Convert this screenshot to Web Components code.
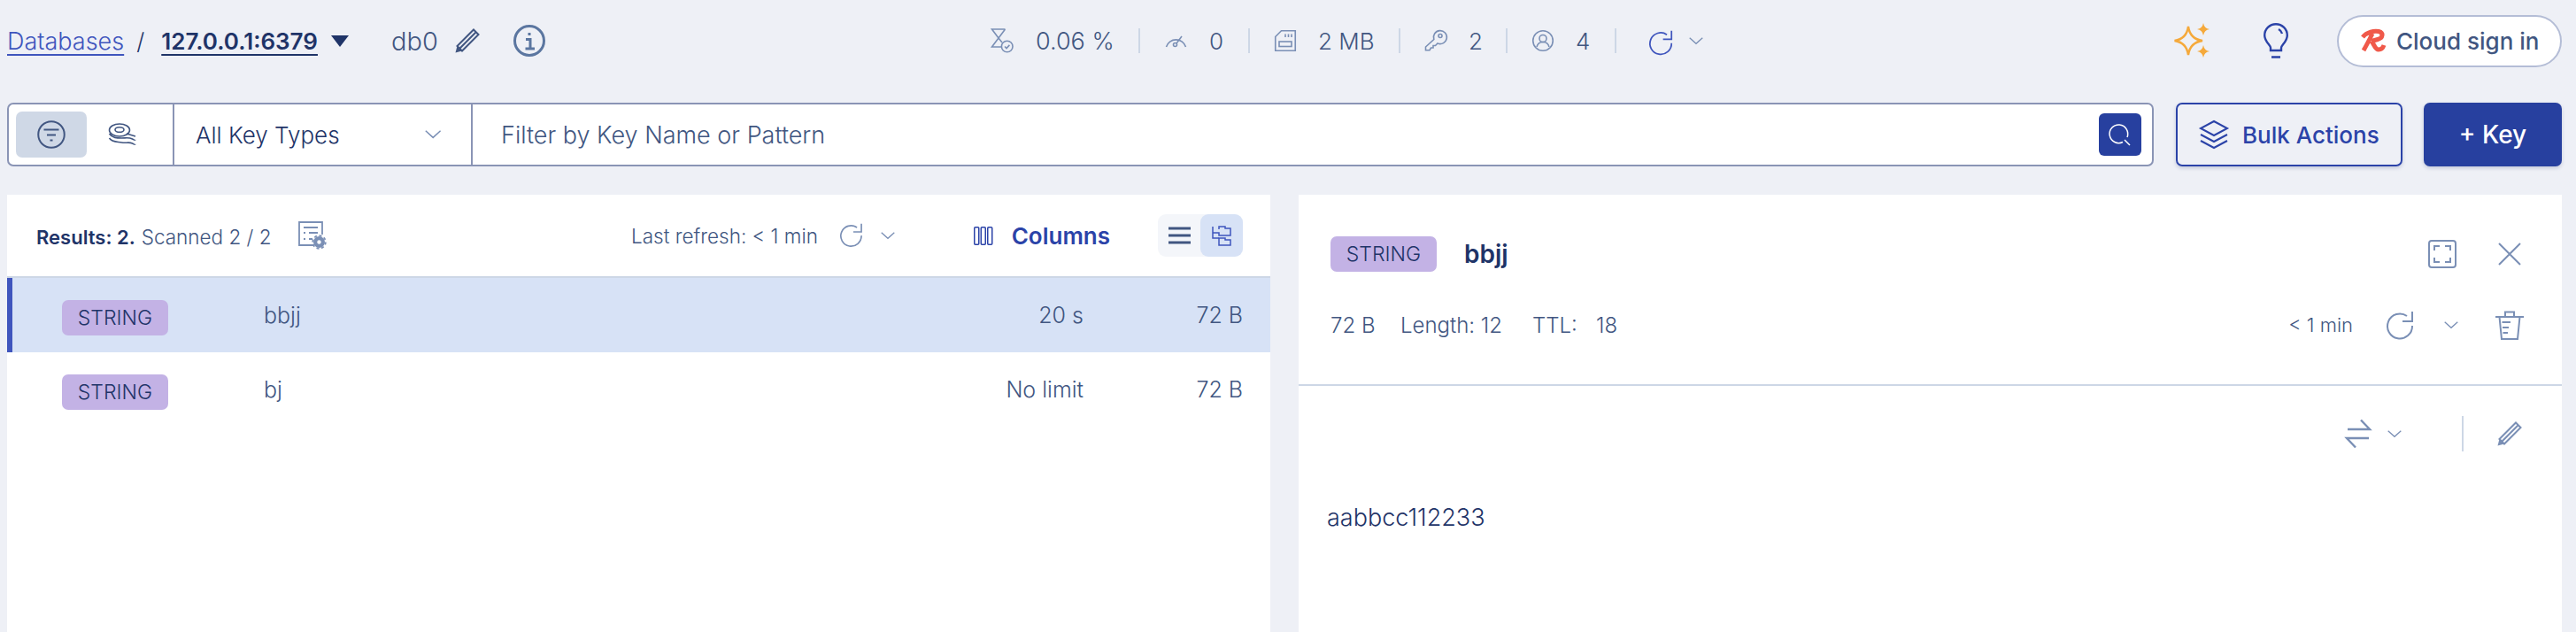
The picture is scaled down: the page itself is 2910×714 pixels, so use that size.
<!DOCTYPE html>
<html>
<head>
<meta charset="utf-8">
<title>Browser</title>
<style>
html, body
{
	margin     : 0;
	padding    : 0;
	height     : 714px;
	overflow   : hidden;
	background : #eef0f6;
	color      : #415681;
	font-family: Inter, "Liberation Sans", sans-serif;
	font-size  : 24px;
	font-weight: 350;
}
</style>
</head>
<body>
<rs-app>
	<rs-top-bar slot="top"></rs-top-bar>
	<rs-filter-bar slot="filter"></rs-filter-bar>
	<rs-key-list slot="left">
		<rs-key-row selected name="bbjj" ttl="20 s" size="72 B"></rs-key-row>
		<rs-key-row name="bj" ttl="No limit" size="72 B"></rs-key-row>
	</rs-key-list>
	<rs-key-details slot="right"></rs-key-details>
</rs-app>

<script>
const ICONS = {
	hourglass : [25, 28, `<path d="M15.5 1H0.5L8 11L0.5 21H11M15.5 1L8 11L12 16"/><circle cx="17.7" cy="20.5" r="6.3"/><path d="M15 20.5l2 2 3.4-3.6"/>`],
	gauge     : [25, 16, `<path d="M1.5 15A11.5 11.5 0 0 1 23.5 15"/><circle cx="11.5" cy="12.5" r="2"/><path d="M13 11L19 3"/>`],
	sd        : [24, 24, `<path d="M0.75 7.5L7.5 0.75H23.25V23.25H0.75Z"/><path d="M12 4.5V8M15.5 4.5V8M19 4.5V8"/><rect x="5" y="13" width="14" height="5.5"/>`],
	key       : [24, 24, `<path d="M9.8 10.5a7.5 7.5 0 1 1 4.2 4.5l-2.5 2.5h-2.5v2.5h-2.5l-1.5 2.7h-4.5v-3.7z"/><circle cx="17" cy="6.5" r="2"/>`],
	user      : [24, 24, `<circle cx="12" cy="12" r="11.25"/><circle cx="12" cy="9.5" r="4"/><path d="M5 19c1-4 4-5.5 7-5.5s6 1.5 7 5.5"/>`],
	refresh   : [30, 33, `<path d="M23 6A14 14 0 1 0 29 17"/><path d="M29 1V12H18"/>`],
	chevron   : [16, 8, `<path d="M0.7 0.7L8 7.3L15.3 0.7"/>`],
	filter    : [32, 32, `<circle cx="16" cy="16" r="14.75"/><path d="M7.5 10.5H24.5M11 16.5H21M14.5 22.5H17.5"/>`],
	redis     : [32, 26, `<ellipse cx="13" cy="8" rx="11.5" ry="7"/><ellipse cx="13" cy="7.5" rx="5" ry="2.8"/><path d="M21 12L31 15M1.5 12c3 5 9 5 14 5s8-1 12 1 3 1 3 1M1.5 17c3 5 9 4 14 5s8-1 12 1 3 1 3 1"/>`],
	sparkle   : [40, 40, `<path d="M16 4Q18 18 32 20Q18 22 16 36Q14 22 0.5 20Q14 18 16 4Z"/><path class="fill" d="M33 0Q34 6 40 7Q34 8 33 14Q32 8 26 7Q32 6 33 0ZM33 25Q34 31 40 32Q34 33 33 39Q32 33 26 32Q32 31 33 25Z"/>`],
	bulb      : [28, 40, `<path d="M8 31V28C8 25 1.2 21 1.2 14A12.8 12.8 0 0 1 26.8 14C26.8 21 20 25 20 28V31Z"/><path d="M9 38.5H19M17 7A8 8 0 0 1 21 12"/>`],
	logo      : [29, 27, `<path d="M3 9C8 3 16 1.5 21 2.5C27 4 26 10 20 11.5L13 13.5M14 5C11 11 8 17 4 24M13 13.5C16 17 17 23 21 23C24 23 26 21 27 18"/>`],
	layers    : [32, 32, `<path d="M16 1L31 9L16 17L1 9Z"/><path d="M1 16L16 24L31 16M1 23L16 31L31 23"/>`],
	search    : [24, 24, `<path d="M15 20.5A10.3 10.3 0 1 1 20 15"/><path d="M17 18L23 24"/>`],
	pencil    : [28, 28, `<path d="M21 1.5L26.5 7L8 25.5L2.5 20Z"/><path d="M23.7 4.3L5.3 22.7"/><path class="fill" d="M2.5 20L8 25.5L0.5 27.5Z"/>`],
	info      : [36, 36, `<circle cx="18" cy="18" r="16.5"/><path d="M14 16.5H19V27M13.5 27H24"/><path d="M16.5 10.5H19.5"/>`],
	file      : [32, 32, `<path d="M18 27H1V1H27V15"/><path d="M6 7H22M6 13H8M12 13H22M6 20H8M12 20H16"/><circle class="fill" cx="23.5" cy="23.5" r="6.5"/><circle cx="23.5" cy="23.5" r="7.3" stroke-width="2.4" stroke-dasharray="3 2.7" fill="none"/><circle cx="23.5" cy="23.5" r="2.2" style="fill:#fff;stroke:none"/>`],
	columns   : [22, 21, `<rect x="0.75" y="0.75" width="5" height="19.5" rx="1"/><rect x="8.25" y="0.75" width="5" height="19.5" rx="1"/><rect x="15.75" y="0.75" width="5" height="19.5" rx="1"/>`],
	list      : [25, 20, `<path d="M0 2H25M0 10H25M0 18H25"/>`],
	tree      : [22, 23, `<path d="M1 1V14H8M8 4V1H15V3H21V11H8V8H1"/><path d="M8 14H15V16H21V22H8Z"/>`],
	expand    : [32, 32, `<rect x="1" y="1" width="30" height="30" rx="3"/><path d="M7 12V7H13M19 7H25V12M25 20V25H19M13 25H7V20"/>`],
	close     : [26, 26, `<path d="M1 1L25 25M25 1L1 25"/>`],
	trash     : [32, 33, `<path d="M0 7H32M11 6.5V1.5H21V6.5M4.5 7L7 32H25L27.5 7M7.5 13H17M8 19H15M8.5 25H14"/>`],
	transfer  : [28, 34, `<path d="M2 12H27L17 1.5M26 22H1L11 32.5"/>`],
};

class RsIcon extends HTMLElement
{
	constructor ()
	{
		super();
		this.attachShadow({mode:"open"});
	}

	connectedCallback ()
	{
		let [w, h, body] = ICONS[this.getAttribute("name")];
		let sw = this.getAttribute("sw") || 2;
		this.shadowRoot.innerHTML = `
			<style>
			:host { display:block; flex:none; width:${w}px; height:${h}px; color:#7a8fb5; }
			svg   { display:block; overflow:visible; }
			svg * { fill:none; stroke:currentColor; stroke-width:${sw}; }
			svg .fill { fill:currentColor; stroke:none; }
			</style>
			<svg width="${w}" height="${h}" viewBox="0 0 ${w} ${h}">${body}</svg>
		`;
	}
}

class RsBadge extends HTMLElement
{
	constructor ()
	{
		super();
		this.attachShadow({mode:"open"});
		this.shadowRoot.innerHTML = `
			<style>
			:host
			{
				display         : flex;
				flex            : none;
				align-items     : center;
				justify-content : center;
				width           : 120px;
				height          : 40px;
				background      : #c3b2e5;
				border-radius   : 7px;
				color           : #1f3468;
				font-size       : 23px;
			}
			</style>
			<slot></slot>
		`;
	}
}

class RsStat extends HTMLElement
{
	constructor ()
	{
		super();
		this.attachShadow({mode:"open"});
		this.shadowRoot.innerHTML = `
			<style>
			:host
			{
				display      : flex;
				align-items  : center;
				gap          : 25px;
				box-sizing   : border-box;
				height       : 28px;
				padding-left : 28px;
				border-right : 2px solid #cdd7e6;
				font-size    : 26px;
				color        : #415681;
			}
			:host(:first-child) { padding-left : 0; }
			</style>
			<slot name="icon"></slot>
			<slot></slot>
		`;
	}
}

class RsTopBar extends HTMLElement
{
	constructor ()
	{
		super();
		this.attachShadow({mode:"open"});
		this.shadowRoot.innerHTML = `
			<style>
			:host
			{
				display               : grid;
				grid-template-columns : 1112px auto 1fr;
				align-items           : center;
				height                : 92px;
			}
			.crumbs, .stats, .end { display:flex; align-items:center; }
			.link { color:#3f55bd; text-decoration:underline; text-underline-offset:5px; text-decoration-thickness:2px; font-size:27px; }
			.sep  { color:#1f3468; margin:0 19px 0 14px; font-size:26px; }
			.host { color:#1f3468; font-weight:600; font-size:26px; text-decoration:underline; text-underline-offset:5px; text-decoration-thickness:2px; }
			.caret { width:0; height:0; margin:0 48px 0 15px; border:10px solid transparent; border-top:13px solid #1f3468; border-bottom:0; }
			.db   { font-size:29px; margin-right:19px; }
			.edit { margin-right:38px; color:#415681; }
			.info { color:#5b76a0; }
			.end  { justify-content:flex-end; }
			.cloud
			{
				display       : flex;
				align-items   : center;
				gap           : 12px;
				box-sizing    : border-box;
				width         : 254px;
				height        : 59px;
				margin-left   : 55px;
				padding-left  : 24px;
				background    : #fff;
				border        : 2px solid #b4bdd6;
				border-radius : 30px;
				font-size     : 26px;
				font-weight   : 500;
			}
			.refresh { display:flex; align-items:center; gap:22px; padding-left:37px; }
			</style>
			<div class="crumbs">
				<span class="link">Databases</span><span class="sep">/</span><span class="host">127.0.0.1:6379</span>
				<span class="caret"></span>
				<span class="db">db0</span>
				<rs-icon class="edit" name="pencil"></rs-icon>
				<rs-icon class="info" name="info" sw="3"></rs-icon>
			</div>
			<div class="stats">
				<rs-stat style="width:168px;font-size:27px"><rs-icon slot="icon" name="hourglass" sw="1.6"></rs-icon>0.06 %</rs-stat>
				<rs-stat style="width:124px"><rs-icon slot="icon" name="gauge" sw="1.6"></rs-icon>0</rs-stat>
				<rs-stat style="width:170px"><rs-icon slot="icon" name="sd" sw="1.6"></rs-icon>2 MB</rs-stat>
				<rs-stat style="width:121px"><rs-icon slot="icon" name="key" sw="1.6"></rs-icon>2</rs-stat>
				<rs-stat style="width:123px"><rs-icon slot="icon" name="user" sw="1.6"></rs-icon>4</rs-stat>
				<div class="refresh">
					<rs-icon name="refresh" style="color:#3f55bd;width:26px;height:28px;zoom:.87" sw="2"></rs-icon>
					<rs-icon name="chevron" sw="1.3"></rs-icon>
				</div>
			</div>
			<div class="end">
				<rs-icon name="sparkle" style="color:#f5a93b" sw="2.4"></rs-icon>
				<rs-icon name="bulb" style="color:#2b43a8;margin-left:61px" sw="2.4"></rs-icon>
				<div class="cloud">
					<rs-icon name="logo" style="color:#f0594a" sw="5"></rs-icon>
					<span>Cloud sign in</span>
				</div>
			</div>
		`;
	}
}

class RsFilterBar extends HTMLElement
{
	constructor ()
	{
		super();
		this.attachShadow({mode:"open"});
		this.shadowRoot.innerHTML = `
			<style>
			:host
			{
				display     : flex;
				height      : 72px;
				margin-top  : 24px;
			}
			.box
			{
				flex          : 1;
				display       : flex;
				box-sizing    : border-box;
				background    : #fff;
				border        : 2px solid #8a94b5;
				border-radius : 7px;
			}
			.modes
			{
				display      : flex;
				align-items  : center;
				box-sizing   : border-box;
				width        : 187px;
				padding-left : 8px;
				border-right : 2px solid #8a94b5;
			}
			.mode
			{
				display         : flex;
				align-items     : center;
				justify-content : center;
				width           : 80px;
				height          : 52px;
				border-radius   : 7px;
			}
			.mode.on { background:#cfd8e6; margin-right:0; }
			.types
			{
				display         : flex;
				align-items     : center;
				justify-content : space-between;
				box-sizing      : border-box;
				width           : 337px;
				padding         : 0 30px 0 24px;
				border-right    : 2px solid #8a94b5;
				color           : #1f3468;
				font-size       : 26px;
			}
			.query
			{
				flex        : 1;
				display     : flex;
				align-items : center;
				padding     : 0 12px 0 32px;
				font-size   : 27px;
			}
			.query span { flex:1; }
			.go
			{
				display         : flex;
				align-items     : center;
				justify-content : center;
				width           : 48px;
				height          : 48px;
				background      : #27409f;
				border-radius   : 6px;
			}
			.bulk
			{
				display       : flex;
				align-items   : center;
				gap           : 16px;
				box-sizing    : border-box;
				width         : 256px;
				margin-left   : 25px;
				padding-left  : 25px;
				border        : 2px solid #2b43a8;
				border-radius : 7px;
				box-shadow    : 0 2px 4px rgba(30,50,110,.2);
				color         : #2b43a8;
				font-size     : 26px;
				font-weight   : 500;
			}
			.add
			{
				display         : flex;
				align-items     : center;
				justify-content : center;
				width           : 156px;
				margin-left     : 24px;
				background      : #27409f;
				border-radius   : 7px;
				box-shadow      : 0 2px 4px rgba(30,50,110,.2);
				color           : #fff;
				font-size       : 28px;
				font-weight     : 500;
			}
			</style>
			<div class="box">
				<div class="modes">
					<div class="mode on"><rs-icon name="filter" style="color:#415681" sw="2"></rs-icon></div>
					<div class="mode"><rs-icon name="redis" style="color:#415681" sw="1.6"></rs-icon></div>
				</div>
				<div class="types">
					<span>All Key Types</span>
					<rs-icon name="chevron" sw="1.3" style="width:19px;zoom:1.15"></rs-icon>
				</div>
				<div class="query">
					<span>Filter by Key Name or Pattern</span>
					<div class="go"><rs-icon name="search" style="color:#fff" sw="1.5"></rs-icon></div>
				</div>
			</div>
			<div class="bulk"><rs-icon name="layers" style="color:#2b43a8" sw="2"></rs-icon><span>Bulk Actions</span></div>
			<div class="add">+ Key</div>
		`;
	}
}

class RsKeyRow extends HTMLElement
{
	constructor ()
	{
		super();
		this.attachShadow({mode:"open"});
	}

	connectedCallback ()
	{
		let name = this.getAttribute("name");
		let ttl  = this.getAttribute("ttl");
		let size = this.getAttribute("size");
		this.shadowRoot.innerHTML = `
			<style>
			:host
			{
				display               : grid;
				grid-template-columns : 228px 1fr auto 180px;
				align-items           : center;
				box-sizing            : border-box;
				height                : 84px;
				padding               : 0 31px 0 62px;
				font-size             : 25px;
			}
			:host([selected])
			{
				background   : #d7e2f6;
				border-left  : 6px solid #3f55bd;
				padding-left : 56px;
			}
			rs-badge { margin-top : 6px; }
			.size    { text-align : right; }
			</style>
			<rs-badge>STRING</rs-badge>
			<span>${name}</span>
			<span>${ttl}</span>
			<span class="size">${size}</span>
		`;
	}
}

class RsKeyList extends HTMLElement
{
	constructor ()
	{
		super();
		this.attachShadow({mode:"open"});
		this.shadowRoot.innerHTML = `
			<style>
			:host { display:block; background:#fff; height:494px; }
			header
			{
				display       : flex;
				align-items   : center;
				box-sizing    : border-box;
				height        : 94px;
				padding       : 0 31px 0 33px;
				border-bottom : 2px solid #cdd7e6;
				font-size     : 22.5px;
			}
			.count { padding-top:3px; }
			b { color:#1f3468; font-weight:600; margin-right:7px; font-size:22px; }
			.side { display:flex; align-items:center; margin-left:auto; }
			.cols { color:#2b43a8; font-size:26px; font-weight:600; }
			.view { display:flex; width:96px; height:48px; margin-left:54px; background:#f4f6fa; border-radius:9px; }
			.view div { display:flex; flex:1; align-items:center; justify-content:center; border-radius:9px; }
			.view .on { background:#d7e2f6; }
			</style>
			<header>
				<div class="count"><b>Results: 2.</b><span>Scanned 2 / 2</span></div>
				<rs-icon name="file" sw="1.8" style="margin-left:30px"></rs-icon>
				<div class="side">
					<span>Last refresh: &lt; 1 min</span>
					<rs-icon name="refresh" sw="2" style="margin-left:30px;zoom:.83"></rs-icon>
					<rs-icon name="chevron" sw="1.3" style="margin-left:21px"></rs-icon>
					<rs-icon name="columns" sw="1.5" style="color:#2b43a8;margin-left:89px"></rs-icon>
					<span class="cols" style="margin-left:21px">Columns</span>
					<div class="view">
						<div><rs-icon name="list" sw="3" style="color:#415681"></rs-icon></div>
						<div class="on"><rs-icon name="tree" sw="1.5" style="color:#3f55bd"></rs-icon></div>
					</div>
				</div>
			</header>
			<slot></slot>
		`;
	}
}

class RsKeyDetails extends HTMLElement
{
	constructor ()
	{
		super();
		this.attachShadow({mode:"open"});
		this.shadowRoot.innerHTML = `
			<style>
			:host { display:block; background:#fff; height:494px; }
			header
			{
				display       : grid;
				grid-template-rows : 40px 40px;
				row-gap       : 40px;
				padding       : 47px 43px 47px 36px;
				border-bottom : 2px solid #cdd7e6;
			}
			.row { display:flex; align-items:center; }
			.name { color:#1f3468; font-size:28px; font-weight:600; margin-left:31px; }
			.push { margin-left:auto; }
			.meta { font-size:24px; display:grid; grid-template-columns:79px 149px 72px auto; }
			.bar  { display:flex; align-items:center; justify-content:flex-end; height:40px; padding:34px 45px 0 0; }
			.rule { width:2px; height:40px; background:#cdd7e6; margin:0 38px 0 68px; }
			.value { margin:58px 0 0 32px; color:#1f3468; font-size:27px; line-height:34px; }
			</style>
			<header>
				<div class="row">
					<rs-badge>STRING</rs-badge>
					<span class="name">bbjj</span>
					<rs-icon class="push" name="expand"></rs-icon>
					<rs-icon name="close" style="margin:0 3px 0 47px"></rs-icon>
				</div>
				<div class="row">
					<div class="meta"><span>72 B</span><span>Length: 12</span><span>TTL:</span><span>18</span></div>
					<span class="push" style="font-size:22px">&lt; 1 min</span>
					<rs-icon name="refresh" style="margin-left:38px"></rs-icon>
					<rs-icon name="chevron" sw="1.3" style="margin-left:35px"></rs-icon>
					<rs-icon name="trash" style="margin-left:42px"></rs-icon>
				</div>
			</header>
			<div class="bar">
				<rs-icon name="transfer" sw="2.4"></rs-icon>
				<rs-icon name="chevron" sw="1.3" style="margin-left:19px"></rs-icon>
				<div class="rule"></div>
				<rs-icon name="pencil"></rs-icon>
			</div>
			<div class="value">aabbcc112233</div>
		`;
	}
}

class RsApp extends HTMLElement
{
	constructor ()
	{
		super();
		this.attachShadow({mode:"open"});
		this.shadowRoot.innerHTML = `
			<style>
			:host { display:block; padding:0 16px 0 8px; }
			main
			{
				display               : grid;
				grid-template-columns : 1fr 1fr;
				column-gap            : 32px;
				margin-top            : 32px;
			}
			</style>
			<slot name="top"></slot>
			<slot name="filter"></slot>
			<main>
				<slot name="left"></slot>
				<slot name="right"></slot>
			</main>
		`;
	}
}

customElements.define("rs-icon", RsIcon);
customElements.define("rs-badge", RsBadge);
customElements.define("rs-stat", RsStat);
customElements.define("rs-top-bar", RsTopBar);
customElements.define("rs-filter-bar", RsFilterBar);
customElements.define("rs-key-row", RsKeyRow);
customElements.define("rs-key-list", RsKeyList);
customElements.define("rs-key-details", RsKeyDetails);
customElements.define("rs-app", RsApp);
</script>
</body>
</html>
